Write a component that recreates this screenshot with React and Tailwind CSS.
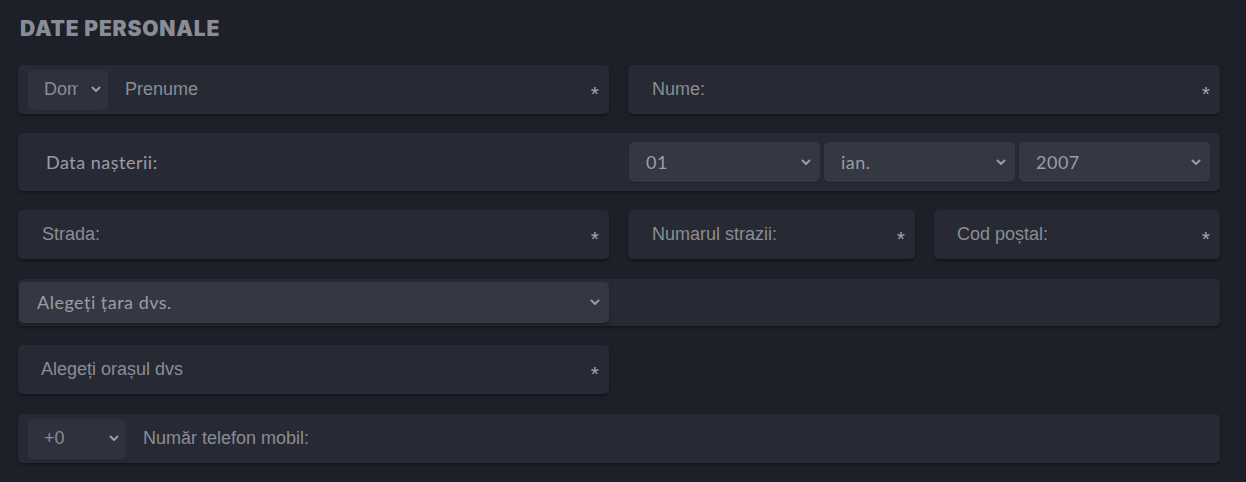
import React from "react";

const Chevron = ({ className = "" }) => (
  <svg width="10" height="7" viewBox="0 0 10 7" className={className}>
    <path d="M1.5 1.5 L5 5 L8.5 1.5" fill="none" stroke="#9a9ca4" strokeWidth="2" strokeLinecap="round" strokeLinejoin="round" />
  </svg>
);

const Star = () => (
  <span className="absolute right-[10px] top-[18px] text-[21px] leading-none text-[#a4a6ad] font-['Liberation_Sans',sans-serif]">*</span>
);

const field = "relative bg-[#272a34] rounded-[5px] shadow-[0_2px_3px_rgba(0,0,0,0.35)]";
const label = "font-['Liberation_Sans',sans-serif] text-[18px] text-[#8a8d95]";
const muli = "font-['Lato',sans-serif] text-[18px] tracking-[0.5px] text-[#9a9da5]";

export default function App() {
  return (
    <div className="w-[1246px] h-[482px] bg-[#1d2029] overflow-hidden pl-[18px] pr-[26px] pt-[16px]">
      <h1 className="pl-[2px] font-['Inter',sans-serif] font-black text-[21px] leading-[26px] tracking-[0.8px] text-[#8a8d95]">
        DATE PERSONALE
      </h1>

      {/* Row 1 */}
      <div className="mt-[23px] flex gap-[19px]">
        <div className={`${field} w-[591px] h-[49px] flex items-center pl-[10px]`}>
          <div className="w-[80px] h-[40px] bg-[#2f323c] rounded-[5px] flex items-center pl-[16px] pr-[7px]">
            <span className={`${label} w-[34px] overflow-hidden whitespace-nowrap`}>Domn</span>
            <Chevron className="ml-auto" />
          </div>
          <span className={`${label} ml-[17px]`}>Prenume</span>
          <Star />
        </div>
        <div className={`${field} w-[592px] h-[49px] flex items-center pl-[24px]`}>
          <span className={label}>Nume:</span>
          <Star />
        </div>
      </div>

      {/* Row 2 */}
      <div className={`${field} mt-[19px] w-[1202px] h-[58px] flex items-center`}>
        <div className="w-[610px] pl-[28px]">
          <span className={muli}>Data nașterii:</span>
        </div>
        <div className="flex gap-[4px] pl-[1px]">
          {["01", "ian.", "2007"].map((t) => (
            <div key={t} className="w-[191px] h-[40px] bg-[#353843] rounded-[5px] shadow-[0_1px_1px_rgba(0,0,0,0.25)] flex items-center pl-[17px] pr-[9px]">
              <span className={muli}>{t}</span>
              <Chevron className="ml-auto" />
            </div>
          ))}
        </div>
      </div>

      {/* Row 3 */}
      <div className="mt-[19px] flex gap-[19px]">
        <div className={`${field} w-[591px] h-[49px] flex items-center pl-[24px]`}>
          <span className={label}>Strada:</span>
          <Star />
        </div>
        <div className={`${field} w-[287px] h-[49px] flex items-center pl-[24px]`}>
          <span className={label}>Numarul strazii:</span>
          <Star />
        </div>
        <div className={`${field} w-[286px] h-[49px] flex items-center pl-[23px]`}>
          <span className={label}>Cod poștal:</span>
          <Star />
        </div>
      </div>

      {/* Row 4 */}
      <div className={`${field} mt-[20px] w-[1202px] h-[47px] pl-[1px] pt-[3px]`}>
        <div className="w-[590px] h-[41px] bg-[#353843] rounded-[5px] shadow-[0_2px_2px_rgba(0,0,0,0.3)] flex items-center pl-[18px] pr-[9px]">
          <span className={muli}>Alegeți țara dvs.</span>
          <Chevron className="ml-auto" />
        </div>
      </div>

      {/* Row 5 */}
      <div className={`${field} mt-[19px] w-[591px] h-[49px] flex items-center pl-[23px]`}>
        <span className={label}>Alegeți orașul dvs</span>
        <Star />
      </div>

      {/* Row 6 */}
      <div className={`${field} mt-[20px] w-[1202px] h-[49px] flex items-center pl-[10px]`}>
        <div className="w-[98px] h-[40px] bg-[#2f323c] rounded-[5px] flex items-center pl-[16px] pr-[7px]">
          <span className={label}>+0</span>
          <Chevron className="ml-auto" />
        </div>
        <span className={`${label} ml-[17px]`}>Număr telefon mobil:</span>
      </div>
    </div>
  );
}
